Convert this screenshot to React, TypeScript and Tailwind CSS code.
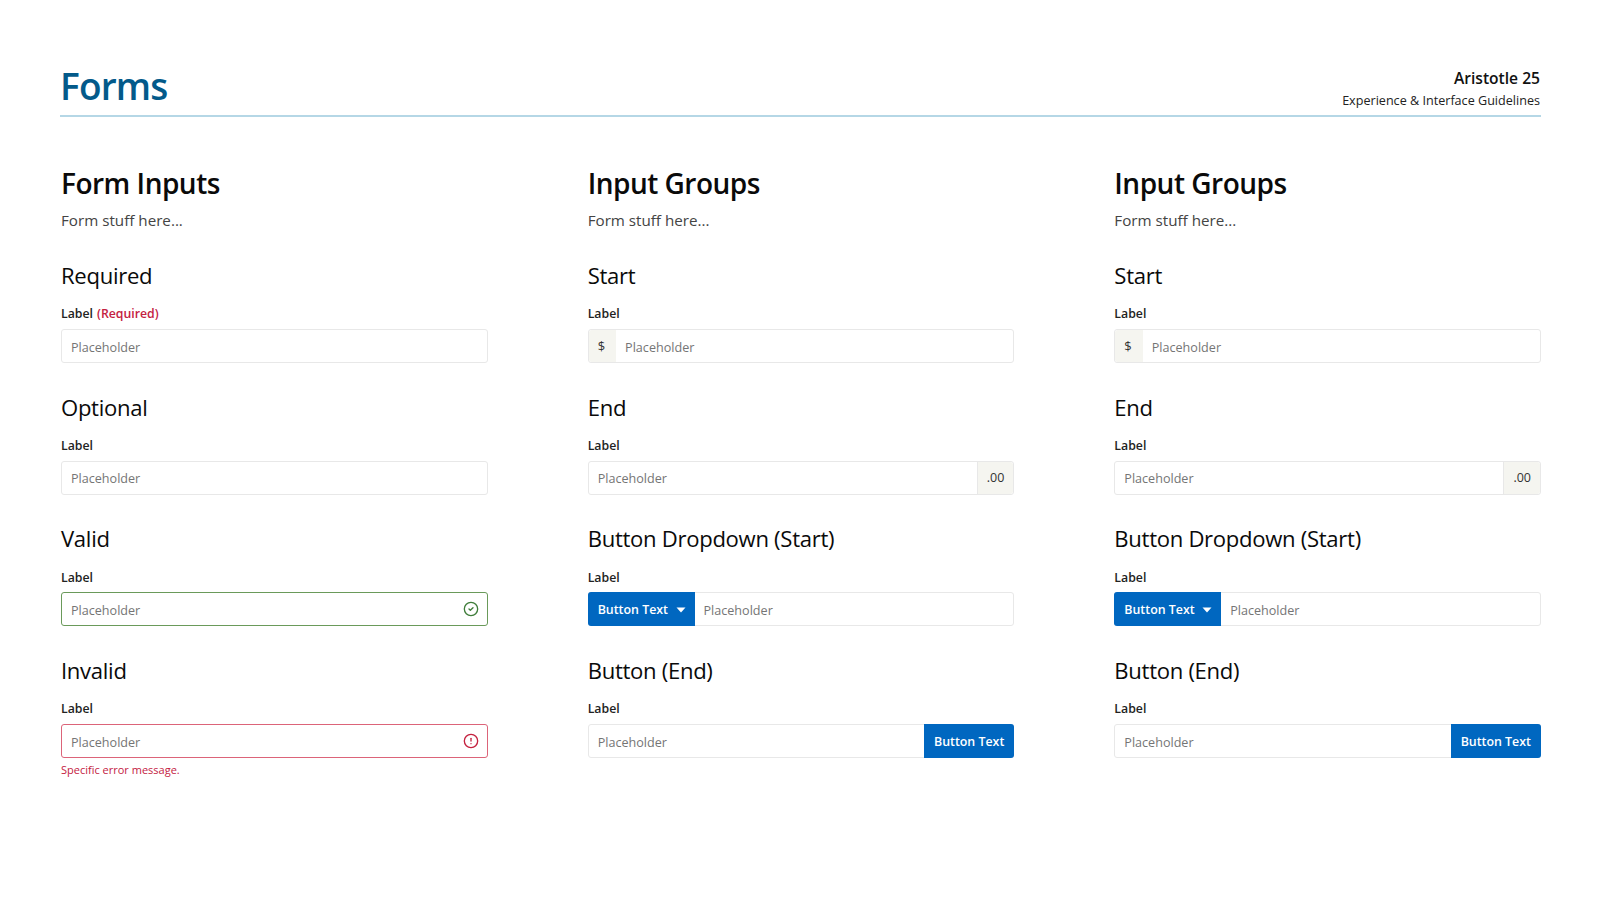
import { CircleCheck, CircleAlert } from "lucide-react"

const fieldBase = "min-w-0 flex-1 bg-transparent px-[9px] pt-[4px] text-[12.6px] text-[#222] outline-none placeholder:text-[#757575]"
const boxBase = "flex h-[34px] items-stretch rounded-[3px] border border-[#e8e8e8] bg-white"

function Heading({ children }: { children: React.ReactNode }) {
  return <h3 className="h-[33px] text-[22.1px] leading-[32px] tracking-[-0.3px] text-[#0a0a0a]">{children}</h3>
}

function Label({ children }: { children?: React.ReactNode }) {
  return (
    <label className="mt-[13.3px] mb-[5.7px] block h-[18px] text-[12.3px] leading-[18px] font-semibold text-[#222]">
      Label{children}
    </label>
  )
}

function Addon({ children }: { children: React.ReactNode }) {
  return <span className="flex items-center rounded-l-[3px] bg-[#f5f5f0] pt-[2px] pr-[11px] pl-[9px] text-[13px] text-[#333]">{children}</span>
}

function Btn({ className, children }: { className: string; children: React.ReactNode }) {
  return (
    <button className={`-my-px flex items-center gap-[7.5px] bg-[#0067c0] pt-[2px] pl-[10px] text-[12.4px] font-semibold text-white ${className}`}>
      {children}
    </button>
  )
}

function Gap() {
  return <div className="mt-[27.7px]" />
}

function Intro({ title }: { title: string }) {
  return (
    <>
      <h2 className="h-[42px] text-[28px] leading-[41px] font-semibold tracking-[-0.5px] text-[#0a0a0a]">{title}</h2>
      <p className="mt-[4px] mb-[26px] h-[24px] text-[15.2px] leading-[23px] text-[#444]">Form stuff here...</p>
    </>
  )
}

function FormInputs() {
  return (
    <section>
      <Intro title="Form Inputs" />
      <Heading>Required</Heading>
      <Label>
        <span className="ml-[4px] text-[#c4213f]">(Required)</span>
      </Label>
      <div className={boxBase}>
        <input className={fieldBase} placeholder="Placeholder" />
      </div>
      <Gap />
      <Heading>Optional</Heading>
      <Label />
      <div className={boxBase}>
        <input className={fieldBase} placeholder="Placeholder" />
      </div>
      <Gap />
      <Heading>Valid</Heading>
      <Label />
      <div className="flex h-[34px] items-center rounded-[3px] border border-[#6a9a5a] bg-white pr-[8px]">
        <input className={fieldBase} placeholder="Placeholder" />
        <CircleCheck className="h-[16px] w-[16px] text-[#3f7d3a]" strokeWidth={2} />
      </div>
      <Gap />
      <Heading>Invalid</Heading>
      <Label />
      <div className="flex h-[34px] items-center rounded-[3px] border border-[#dc6479] bg-white pr-[8px]">
        <input className={fieldBase} placeholder="Placeholder" />
        <CircleAlert className="h-[16px] w-[16px] text-[#c4213f]" strokeWidth={2} />
      </div>
      <p className="mt-[4px] text-[11px] leading-[16px] text-[#c4213f]">Specific error message.</p>
    </section>
  )
}

function InputGroups() {
  return (
    <section>
      <Intro title="Input Groups" />
      <Heading>Start</Heading>
      <Label />
      <div className={boxBase}>
        <Addon>$</Addon>
        <input className={fieldBase} placeholder="Placeholder" />
      </div>
      <Gap />
      <Heading>End</Heading>
      <Label />
      <div className={boxBase}>
        <input className={fieldBase} placeholder="Placeholder" />
        <span className="flex items-center rounded-r-[3px] border-l border-[#e8e8e8] bg-[#f5f5f0] pt-[2px] pr-[9px] pl-[9px] text-[12.5px] text-[#333]">.00</span>
      </div>
      <Gap />
      <Heading>Button Dropdown (Start)</Heading>
      <Label />
      <div className={boxBase}>
        <Btn className="-ml-px rounded-l-[3px] pr-[9px]">
          Button Text
          <svg viewBox="0 0 10 6" className="h-[6px] w-[10px]" fill="white">
            <path d="M0.5 0.5h9L5 5.5z" />
          </svg>
        </Btn>
        <input className={fieldBase} placeholder="Placeholder" />
      </div>
      <Gap />
      <Heading>Button (End)</Heading>
      <Label />
      <div className={boxBase}>
        <input className={fieldBase} placeholder="Placeholder" />
        <Btn className="-mr-px rounded-r-[3px] pr-[10px]">Button Text</Btn>
      </div>
    </section>
  )
}

export default function App() {
  return (
    <div className="min-h-[900px] bg-white pr-[59px] pl-[60px] pt-[60px] font-['Open_Sans',sans-serif]">
      <header className="flex h-[57px] items-end justify-between border-b-2 border-[#b5d7e6] pb-[3px]">
        <h1 className="pb-px text-[37px] leading-[50px] font-semibold tracking-[-0.8px] text-[#035a8a]">Forms</h1>
        <div className="pr-px pb-px text-right">
          <div className="text-[15.6px] leading-[25px] font-semibold text-[#111]">Aristotle 25</div>
          <div className="text-[12.6px] leading-[20px] text-[#222]">Experience &amp; Interface Guidelines</div>
        </div>
      </header>
      <div className="mt-[46px] ml-px grid grid-cols-3 gap-x-[100px]">
        <FormInputs />
        <InputGroups />
        <InputGroups />
      </div>
    </div>
  )
}
